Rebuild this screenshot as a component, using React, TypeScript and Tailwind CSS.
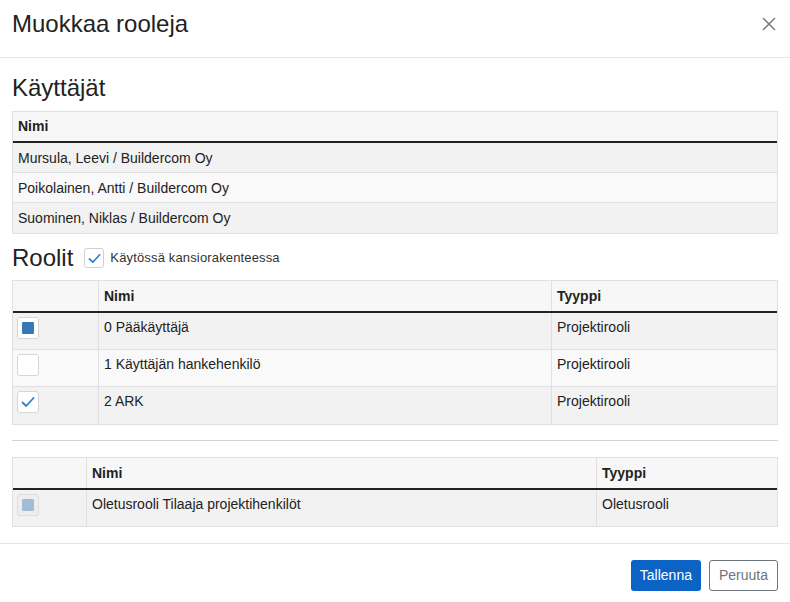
import React, { useState } from 'react';

type Role = { id: string; name: string; type: string; state: 'partial' | 'off' | 'on' };

const users = [
  'Mursula, Leevi / Buildercom Oy',
  'Poikolainen, Antti / Buildercom Oy',
  'Suominen, Niklas / Buildercom Oy',
];

const Check: React.FC<{ size?: number }> = ({ size = 14 }) => (
  <svg width={size} height={size} viewBox="0 0 14 14" fill="none">
    <path d="M1.5 7.5 L5.2 11 L12.5 3" stroke="#2f7ccf" strokeWidth="1.8" strokeLinecap="round" strokeLinejoin="round" />
  </svg>
);

const Box: React.FC<{ state: 'partial' | 'off' | 'on' | 'disabled'; onClick?: () => void }> = ({ state, onClick }) => (
  <button
    onClick={onClick}
    className={`w-[22px] h-[22px] rounded-[3px] border flex items-center justify-center ${
      state === 'disabled' ? 'bg-[#eeeeee] border-[#dddddd]' : 'bg-white border-[#d6d6d6]'
    }`}
  >
    {state === 'partial' && <div className="w-3 h-3 rounded-[1px] bg-[#337ab7]" />}
    {state === 'disabled' && <div className="w-3 h-3 rounded-[1px] bg-[#a2bcd6]" />}
    {state === 'on' && <Check />}
  </button>
);

const App: React.FC = () => {
  const [folders, setFolders] = useState(true);
  const [roles, setRoles] = useState<Role[]>([
    { id: '0', name: '0 Pääkäyttäjä', type: 'Projektirooli', state: 'partial' },
    { id: '1', name: '1 Käyttäjän hankehenkilö', type: 'Projektirooli', state: 'off' },
    { id: '2', name: '2 ARK', type: 'Projektirooli', state: 'on' },
  ]);

  const toggle = (id: string) =>
    setRoles(prev => prev.map(r => (r.id === id ? { ...r, state: r.state === 'on' ? 'off' : 'on' } : r)));

  return (
    <div className="w-[790px] h-[602px] bg-white text-[#222] font-['Liberation_Sans',Arial,sans-serif] flex flex-col">
      {/* header */}
      <div className="h-[58px] border-b border-[#e5e5e5] px-3 pt-[11px] flex justify-between items-start">
        <h1 className="text-[24px] leading-[26px]">Muokkaa rooleja</h1>
        <button className="mt-[6px] mr-[2px]">
          <svg width="14" height="14" viewBox="0 0 14 14">
            <path d="M1 1 L13 13 M13 1 L1 13" stroke="#7a7a7a" strokeWidth="1.5" />
          </svg>
        </button>
      </div>

      <div className="px-3 pt-[17px]">
        <h2 className="text-[24px] leading-[26px] mb-[10px]">Käyttäjät</h2>
        <div className="border border-[#e0e0e0] text-[14px]">
          <div className="h-[31px] bg-[#f7f7f7] border-b-2 border-[#222] px-[5px] flex items-center font-bold">Nimi</div>
          {users.map((u, i) => (
            <div
              key={u}
              className={`h-[30px] px-[5px] pt-[1px] flex items-center border-[#e0e0e0] ${i < users.length - 1 ? 'border-b' : ''} ${
                i % 2 === 0 ? 'bg-[#f2f2f2]' : 'bg-[#f9f9f9]'
              }`}
            >
              {u}
            </div>
          ))}
        </div>

        <div className="flex items-center mt-[11px] h-[26px]">
          <h2 className="text-[24px] leading-[26px]">Roolit</h2>
          <button
            onClick={() => setFolders(!folders)}
            className="ml-[11px] w-5 h-5 rounded-[3px] border border-[#d0d0d0] bg-white flex items-center justify-center"
          >
            {folders && <Check size={13} />}
          </button>
          <span className="ml-[6px] text-[13px] tracking-[0.15px] text-[#333]">Käytössä kansiorakenteessa</span>
        </div>

        <div className="mt-[9px] border border-[#e0e0e0] text-[14px]">
          <div className="grid grid-cols-[86px_453px_1fr] h-[32px] bg-[#f7f7f7] border-b-2 border-[#222] font-bold">
            <div className="border-r border-[#e0e0e0]" />
            <div className="border-r border-[#e0e0e0] px-[5px] flex items-center">Nimi</div>
            <div className="px-[5px] flex items-center">Tyyppi</div>
          </div>
          {roles.map((r, i) => (
            <div
              key={r.id}
              className={`grid grid-cols-[86px_453px_1fr] h-[37px] border-[#e0e0e0] ${i < roles.length - 1 ? 'border-b' : ''} ${
                i % 2 === 0 ? 'bg-[#f2f2f2]' : 'bg-[#f9f9f9]'
              }`}
            >
              <div className="border-r border-[#e0e0e0] pl-[4px] pt-[4px]">
                <Box state={r.state} onClick={() => toggle(r.id)} />
              </div>
              <div className="border-r border-[#e0e0e0] px-[5px] pt-[4px] leading-5">{r.name}</div>
              <div className="px-[5px] pt-[4px] leading-5">{r.type}</div>
            </div>
          ))}
        </div>

        <div className="mt-[15px] border-t border-[#d4d4d4]" />

        <div className="mt-4 border border-[#e0e0e0] text-[14px]">
          <div className="grid grid-cols-[74px_510px_1fr] h-[32px] bg-[#f7f7f7] border-b-2 border-[#222] font-bold">
            <div className="border-r border-[#e0e0e0]" />
            <div className="border-r border-[#e0e0e0] px-[5px] flex items-center">Nimi</div>
            <div className="px-[5px] flex items-center">Tyyppi</div>
          </div>
          <div className="grid grid-cols-[74px_510px_1fr] h-[36px] bg-[#f2f2f2]">
            <div className="border-r border-[#e0e0e0] pl-[4px] pt-[4px]">
              <Box state="disabled" />
            </div>
            <div className="border-r border-[#e0e0e0] px-[5px] pt-[4px] leading-5">Oletusrooli Tilaaja projektihenkilöt</div>
            <div className="px-[5px] pt-[4px] leading-5">Oletusrooli</div>
          </div>
        </div>
      </div>

      {/* footer */}
      <div className="mt-4 border-t border-[#e5e5e5] px-3 pt-4 flex justify-end gap-2">
        <button className="h-[31px] px-[9px] rounded-[3px] bg-[#0a63c5] text-white text-[14px]">Tallenna</button>
        <button className="h-[31px] px-[9px] rounded-[3px] border border-[#6c757d] text-[#6c757d] text-[14px]">Peruuta</button>
      </div>
    </div>
  );
};

export default App;
